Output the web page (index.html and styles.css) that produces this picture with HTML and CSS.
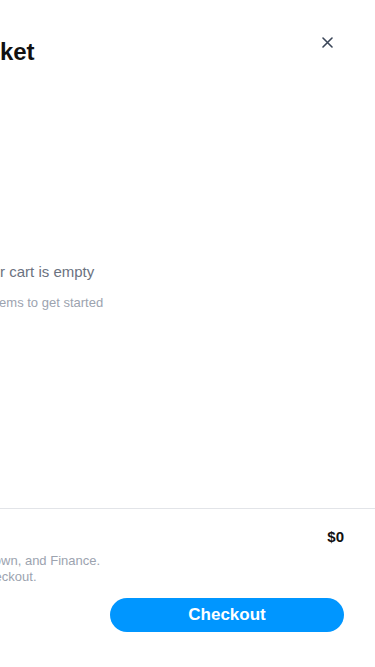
FILE: index.html
```html
<!DOCTYPE html>
<html lang="en">
<head>
    <meta charset="UTF-8">
    <meta name="viewport" content="width=device-width, initial-scale=1.0">
    <title>Basket</title>
    <link rel="stylesheet" href="styles.css">
</head>
<body>
    <div class="drawer">
        <div class="drawer-head">
            <div class="head-left">
                <svg class="bag-icon" width="24" height="24" viewBox="0 0 24 24" fill="none" stroke="#111" stroke-width="1.8">
                    <path d="M5 8h14l-1 13H6L5 8z"/>
                    <path d="M9 8V6a3 3 0 0 1 6 0v2"/>
                </svg>
                <h2 class="drawer-title">Your Shopping Basket</h2>
            </div>
            <button class="btn-close" type="button" aria-label="Close">
                <svg width="11" height="11" viewBox="0 0 11 11">
                    <path d="M1 1L10 10M10 1L1 10" stroke="#3b4658" stroke-width="1.6" stroke-linecap="round"/>
                </svg>
            </button>
        </div>

        <div class="drawer-body">
            <p class="empty-title">Your cart is empty</p>
            <p class="empty-sub">Add items to get started</p>
        </div>

        <div class="drawer-foot">
            <div class="total-row">
                <span class="total-label">Subtotal</span>
                <span class="total-value">$0</span>
            </div>
            <p class="note">Free delivery on all orders to Midtown, Downtown, and Finance.<br>Delivery fee and all taxes are calculated at checkout.</p>
            <div class="actions">
                <button class="btn-checkout" type="button">Checkout</button>
            </div>
        </div>
    </div>
</body>
</html>
```

FILE: styles.css
```css
body{
    margin: 0;
    overflow: hidden;
    background: #fff;
    font-family: "Liberation Sans", Arial, sans-serif;
}
.drawer{
    width: 681px;
    height: 667px;
    margin-left: -306px;
    padding: 0 31px;
    box-sizing: border-box;
    display: flex;
    flex-direction: column;
    background: #fff;
}
.drawer-head{
    display: flex;
    justify-content: space-between;
    align-items: flex-start;
    padding: 24px 0 14px;
}
.head-left{
    display: flex;
    align-items: center;
    gap: 30px;
    margin-top: 12px;
}
.drawer-title{
    margin: 0;
    font-size: 24px;
    line-height: 32px;
    font-weight: bold;
    color: #111;
}
.btn-close{
    width: 34px;
    height: 24px;
    margin-top: 6px;
    padding: 0;
    border: 0;
    background: none;
    display: flex;
    align-items: center;
    justify-content: center;
    cursor: pointer;
}
.drawer-body{
    flex: 1;
    text-align: center;
    padding-top: 180px;
}
.empty-title{
    margin: 0;
    font-size: 15px;
    line-height: 20px;
    color: #6b7280;
}
.empty-sub{
    margin: 12px 0 0;
    font-size: 13px;
    line-height: 18px;
    color: #9ca3af;
}
.drawer-foot{
    border-top: 1px solid #e2e4e8;
    margin: 0 -31px;
    padding: 18px 31px 35px;
}
.total-row{
    display: flex;
    justify-content: space-between;
    font-size: 15px;
    line-height: 20px;
    font-weight: bold;
    color: #111;
}
.note{
    margin: 6px 0 0 8px;
    font-size: 13px;
    line-height: 16px;
    color: #9ca3af;
}
.actions{
    display: flex;
    justify-content: flex-end;
    margin-top: 13px;
}
.btn-checkout{
    width: 234px;
    height: 34px;
    border: 0;
    border-radius: 17px;
    background: #0096ff;
    color: #fff;
    font-family: inherit;
    font-size: 17px;
    font-weight: bold;
    cursor: pointer;
}
```
